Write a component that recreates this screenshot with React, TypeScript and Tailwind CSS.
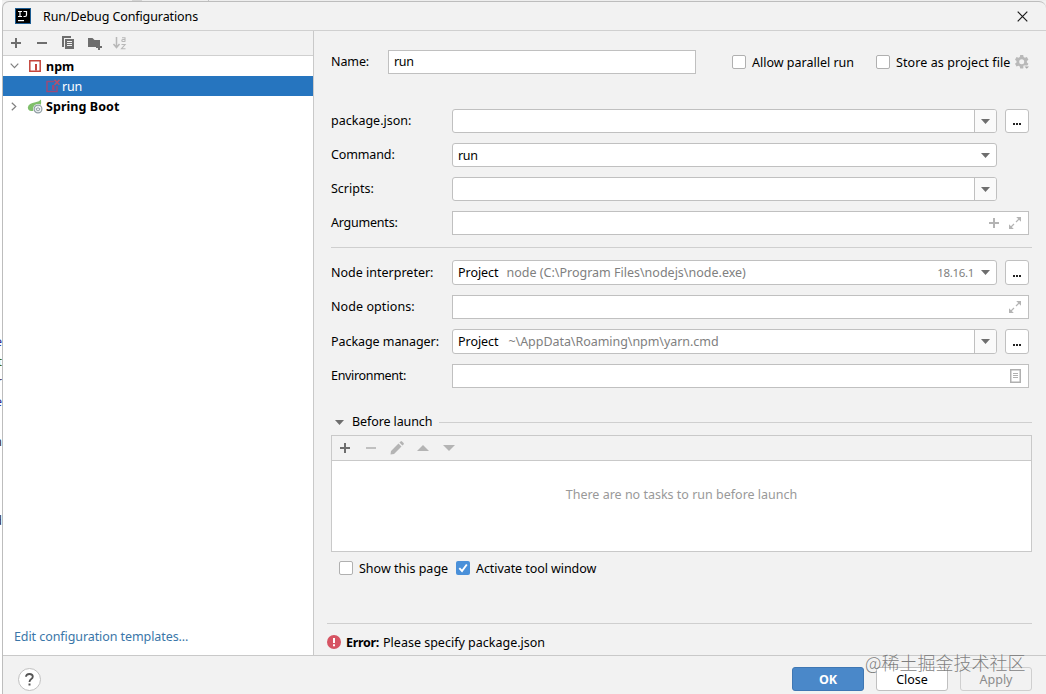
import React from "react";

const Plus = ({ className = "text-[#6e6e6e]" }: { className?: string }) => (
  <svg width="16" height="16" viewBox="0 0 16 16" className={className}>
    <path d="M7 3h2v4h4v2H9v4H7V9H3V7h4z" fill="currentColor" />
  </svg>
);

const Minus = ({ className = "text-[#6e6e6e]" }: { className?: string }) => (
  <svg width="16" height="16" viewBox="0 0 16 16" className={className}>
    <path d="M3 7h10v2H3z" fill="currentColor" />
  </svg>
);

const Copy = () => (
  <svg width="16" height="16" viewBox="0 0 16 16">
    <path d="M2 1h9v2H4v9H2z" fill="#6e6e6e" />
    <path d="M5 4h9v10H5z" fill="#6e6e6e" />
    <path d="M7 6.5h5M7 8.5h5M7 10.5h5" stroke="#f2f2f2" strokeWidth="1" />
  </svg>
);

const FolderPlus = () => (
  <svg width="16" height="16" viewBox="0 0 16 16">
    <path d="M2 3h4.500l2 2H14v4h-2v3H2z" fill="#6e6e6e" />
    <path d="M12 9h2v2h2v2h-2v2h-2v-2h-2v-2h2z" fill="#6e6e6e" />
  </svg>
);

const SortAz = () => (
  <svg width="16" height="16" viewBox="0 0 16 16" fill="none" stroke="#b8b8b8">
    <path d="M4.5 2v10M1.500 9l3 3.600 3-3.600" strokeWidth="1.500" />
    <path d="M10 2.700h3v4M13 4.500h-2.200q-1 0-1 1t1 1H13" strokeWidth="1.100" />
    <path d="M9.500 9.500h3.600l-3.600 4.200h4" strokeWidth="1.100" />
  </svg>
);

const Down = ({ className = "text-[#6e6e6e]" }: { className?: string }) => (
  <svg width="9" height="5" viewBox="0 0 9 5" className={className}>
    <path d="M0 0h9L4.500 5z" fill="currentColor" />
  </svg>
);

const Expand = () => (
  <svg width="14" height="14" viewBox="0 0 14 14" fill="none" stroke="#b4b4b4" strokeWidth="1.200">
    <path d="M8 6 11.500 2.500M2.500 11.500 6 8" />
    <path d="M8.200 1h4.800v4.800zM1 8.200v4.800h4.800z" fill="#b4b4b4" stroke="none" />
  </svg>
);

const Gear = () => (
  <svg width="16" height="16" viewBox="0 0 16 16">
    <path
      d="M6.200 1h3l.4 2 1.300.8 2-.7 1.500 2.600-1.500 1.300v1.500l1.500 1.300-1.500 2.600-2-.7-1.300.8-.4 2h-3l-.4-2-1.300-.8-2 .7L1 9.800l1.500-1.300V7L1 5.700l1.500-2.600 2 .7L5.800 3zM7.700 5.300a2.500 2.500 0 1 0 0 5 2.500 2.500 0 0 0 0-5z"
      fill="#b9b9b9"
      fillRule="evenodd"
    />
    <path d="M9.500 11.500h6v1.500l-2.800 2.800-3.200-2.800z" fill="#f2f2f2" />
    <path d="M10.500 12.500h4.500l-2.250 2.300z" fill="#a8a8a8" />
  </svg>
);

const Checkbox = ({ checked = false }: { checked?: boolean }) =>
  checked ? (
    <span className="flex h-[14px] w-[14px] shrink-0 items-center justify-center rounded-[2px] bg-[#4a90d9]">
      <svg width="14" height="14" viewBox="0 0 14 14">
        <path d="M3.300 7.200 6 10l4.800-6.500" fill="none" stroke="#fff" strokeWidth="1.900" />
      </svg>
    </span>
  ) : (
    <span className="h-[14px] w-[14px] shrink-0 rounded-[2px] border border-[#b0b0b0] bg-white" />
  );

const Combo = ({
  split = false,
  className = "h-6",
  children,
}: {
  split?: boolean;
  className?: string;
  children?: React.ReactNode;
}) => (
  <div className={`flex w-[545px] rounded-[3px] border border-[#c0c0c0] bg-white ${className}`}>
    <div className="flex flex-1 items-center pl-[5px]">{children}</div>
    <div
      className={`flex w-[22px] items-center justify-center ${
        split ? "rounded-r-[2px] border-l border-[#c0c0c0] bg-[#fafafa]" : ""
      }`}
    >
      <Down />
    </div>
  </div>
);

const Field = ({ children }: { children?: React.ReactNode }) => (
  <div className="flex h-6 w-[577px] items-center justify-end border border-[#c0c0c0] bg-white pr-[6px]">
    {children}
  </div>
);

const More = ({ className = "h-6" }: { className?: string }) => (
  <button
    className={`ml-2 flex w-6 items-center justify-center rounded-[3px] border border-[#c0c0c0] bg-white pt-[6px] ${className}`}
  >
    <svg width="8" height="2" viewBox="0 0 8 2">
      <path d="M0 0h2v2H0zM3 0h2v2H3zM6 0h2v2H6z" fill="#222" />
    </svg>
  </button>
);

const Row = ({
  label,
  className = "h-6",
  labelClass = "pb-px",
  children,
}: {
  label: string;
  className?: string;
  labelClass?: string;
  children: React.ReactNode;
}) => (
  <div className={`flex shrink-0 ${className}`}>
    <span className={`flex w-[121px] items-center ${labelClass}`}>{label}</span>
    {children}
  </div>
);

const fragments = [
  { t: "e", c: "text-[#2b2b90]", h: "h-5" },
  { t: "t", c: "text-[#4d6b10]", h: "h-5" },
  { t: "r", c: "text-[#443355]", h: "h-5" },
  { t: "e", c: "text-[#2b2b90]", h: "h-10" },
  { t: "n", c: "text-[#333333]", h: "h-[79px]" },
  { t: "d", c: "text-[#333333]", h: "h-5" },
];

export default function App() {
  return (
    <div className="relative flex h-[694px] w-[1046px] overflow-hidden bg-[#f2f2f2] font-['Noto_Sans','Noto_Sans_CJK_SC',sans-serif] text-[12.500px] leading-4 whitespace-nowrap text-black">
      <div className="w-[2px] shrink-0 overflow-hidden bg-white pt-[334px]">
        {fragments.map((f, i) => (
          <div key={i} className={`flex w-[2px] justify-end ${f.c} ${f.h}`}>
            {f.t}
          </div>
        ))}
      </div>
      <div className="flex min-w-0 flex-1 flex-col">
        <div className="flex h-px shrink-0 bg-[#eeeeee]">
          <span className="ml-[130px] w-[10px] bg-[#d4d4d4]" />
          <span className="ml-[66px] w-px bg-[#c4c4c4]" />
        </div>
        <div className="flex min-h-0 flex-1 flex-col rounded-t-[7px] border-t border-l border-[#bdbdbd] bg-[#f2f2f2]">
          <header className="flex h-[29px] shrink-0 items-center border-b border-[#d0d0d0] pr-[18px] pl-3">
            <svg width="16" height="16" viewBox="0 0 16 16">
              <path d="M0 0h16v16H0z" fill="#1c5c92" />
              <path d="M1 1h14v14H1z" fill="#000" />
              <path d="M3 3.500h4M5 3.500v5M3 8.500h4M8.500 3.500h3v3.500q0 1.500-1.500 1.500H8.500" fill="none" stroke="#fff" strokeWidth="1.200" />
              <path d="M3 12h6v1.200H3z" fill="#fff" />
            </svg>
            <h1 className="ml-3 flex-1 pt-0.5 tracking-[-0.100px]">Run/Debug Configurations</h1>
            <svg width="11" height="11" viewBox="0 0 11 11">
              <path d="m.7.7 9.600 9.600M10.300.7.7 10.300" stroke="#1a1a1a" strokeWidth="1.200" />
            </svg>
          </header>
          <main className="flex h-[624px] shrink-0">
            <aside className="flex w-[311px] shrink-0 flex-col border-r border-[#c9c9c9] bg-white">
              <div className="flex h-[25px] shrink-0 items-center gap-[10px] border-b border-[#d0d0d0] bg-[#f2f2f2] pl-[5px]">
                <Plus />
                <Minus />
                <Copy />
                <FolderPlus />
                <SortAz />
              </div>
              <div className="flex h-5 items-center pl-[7px] font-bold">
                <svg width="9" height="6" viewBox="0 0 9 6">
                  <path d="m.7.7 3.800 4 3.800-4" fill="none" stroke="#808080" strokeWidth="1.200" />
                </svg>
                <svg className="ml-[10px]" width="12" height="12" viewBox="0 0 12 12">
                  <path d="M.8.8h10.400v10.400H.8z" fill="#fff" stroke="#c4453c" strokeWidth="1.500" />
                  <path d="M6 4h2v6.500H6z" fill="#c4453c" />
                </svg>
                <span className="ml-[5px] pt-0.5">npm</span>
              </div>
              <div className="flex h-5 items-center bg-[#2675bf] pl-[43px] text-white">
                <svg width="14" height="14" viewBox="0 0 14 14">
                  <path d="M8 2.500H1v10h10V7" fill="none" stroke="#9b4b78" strokeWidth="1.500" />
                  <path d="M6 6h2.500v5H6z" fill="#9b4b78" />
                  <path d="m8.500.8 5 5M13.500.8l-5 5" stroke="#bb5068" strokeWidth="1.600" />
                </svg>
                <span className="ml-[2px] pt-0.5 tracking-[-0.200px]">run</span>
              </div>
              <div className="flex h-5 items-center pl-2 font-bold">
                <svg width="6" height="9" viewBox="0 0 6 9">
                  <path d="m.8.7 4 3.800-4 3.800" fill="none" stroke="#808080" strokeWidth="1.200" />
                </svg>
                <svg className="ml-[10px]" width="16" height="16" viewBox="0 0 16 16">
                  <path d="M14 1.500Q12.500 3.800 8.500 4.200 1.500 5 .8 9.500q0 2 1.500 3 5 1.500 8-1.500Q15 8 14 1.500z" fill="#7fbf6b" />
                  <circle cx="11" cy="11" r="5" fill="#fff" />
                  <circle cx="11" cy="11" r="3.900" fill="#f4f7f8" stroke="#8f9da3" strokeWidth="1.200" />
                  <path d="M11 8.700v2.500M9.300 10q-.6 2.800 1.700 2.900 2.300-.1 1.700-2.900" fill="none" stroke="#8f9da3" />
                </svg>
                <span className="ml-[3px] pt-0.5 tracking-[0.060px]">Spring Boot</span>
              </div>
              <a className="mt-auto mb-[10px] ml-[11px] tracking-[-0.080px] text-[#3a76a8]">Edit configuration templates...</a>
            </aside>
            <section className="flex min-w-0 flex-1 flex-col pl-[13px]">
              <div className="flex h-[592px] shrink-0 flex-col pl-1">
                <div className="mt-[19px] flex h-6 shrink-0 items-center">
                  <span className="w-[57px] tracking-[-0.100px]">Name:</span>
                  <div className="flex h-6 w-[308px] items-center border border-[#c0c0c0] bg-white pl-[5px] tracking-[-0.300px]">run</div>
                  <label className="ml-9 flex w-[144px] items-center gap-[6px]">
                    <Checkbox />
                    <span className="pt-0.5">Allow parallel run</span>
                  </label>
                  <label className="flex w-[138px] items-center gap-[6px]">
                    <Checkbox />
                    <span className="pt-0.5 tracking-[0.100px]">Store as project file</span>
                  </label>
                  <Gear />
                </div>
                <div className="mt-[35px] flex flex-col gap-[10px]">
                  <Row label="package.json:">
                    <Combo split />
                    <More />
                  </Row>
                  <Row label="Command:" labelClass="pb-px tracking-[-0.120px]">
                    <Combo>
                      <span className="pt-0.5 tracking-[-0.300px]">run</span>
                    </Combo>
                  </Row>
                  <Row label="Scripts:">
                    <Combo split />
                  </Row>
                  <Row label="Arguments:" labelClass="pb-px tracking-[-0.220px]">
                    <Field>
                      <span className="mr-[6px]">
                        <Plus className="text-[#b4b4b4]" />
                      </span>
                      <Expand />
                    </Field>
                  </Row>
                </div>
                <div className="mt-3 h-px w-[701px] shrink-0 bg-[#cfcfcf]" />
                <div className="mt-3 flex flex-col gap-[10px]">
                  <Row label="Node interpreter:" className="h-[25px]" labelClass="pt-px">
                    <Combo className="h-[25px]">
                      <span className="pt-px tracking-[-0.050px]">Project</span>
                      <span className="ml-2 flex-1 pt-px text-[#808080]">node (C:\Program Files\nodejs\node.exe)</span>
                      <span className="pt-px text-[11.500px] tracking-[-0.320px] text-[#808080]">18.16.1</span>
                    </Combo>
                    <More className="h-[25px]" />
                  </Row>
                  <Row label="Node options:" labelClass="pb-px tracking-[0.080px]">
                    <Field>
                      <Expand />
                    </Field>
                  </Row>
                  <Row label="Package manager:" className="h-[25px]" labelClass="pt-px tracking-[-0.060px]">
                    <Combo split className="h-[25px]">
                      <span className="pt-px tracking-[-0.050px]">Project</span>
                      <span className="ml-[10px] pt-px tracking-[-0.050px] text-[#808080]">~\AppData\Roaming\npm\yarn.cmd</span>
                    </Combo>
                    <More className="h-[25px]" />
                  </Row>
                  <Row label="Environment:" labelClass="pb-px tracking-[-0.320px]">
                    <Field>
                      <svg width="13" height="14" viewBox="0 0 13 14" fill="none" stroke="#b0b0b0">
                        <path d="M1.750.750h9.500v12.500h-9.500z" strokeWidth="1.500" />
                        <path d="M4 4.500h5M4 6.500h5M4 8.500h5" />
                      </svg>
                    </Field>
                  </Row>
                </div>
                <div className="mt-[25px] flex h-[18px] w-[701px] shrink-0 items-center pl-1">
                  <Down />
                  <span className="ml-2 w-[87px] tracking-[-0.100px]">Before launch</span>
                  <span className="h-px flex-1 bg-[#cfcfcf]" />
                </div>
                <div className="mt-1 flex h-[117px] w-[701px] shrink-0 flex-col border border-[#c9c9c9] bg-white">
                  <div className="flex h-[25px] shrink-0 items-center gap-[10px] border-b border-[#c9c9c9] bg-[#f2f2f2] pl-[5px]">
                    <Plus />
                    <Minus className="text-[#c0c0c0]" />
                    <svg width="16" height="16" viewBox="0 0 16 16" fill="#b4b4b4">
                      <path d="M9.500 3.500 12.500 6.500 5 14l-3.500.5L2 11zM10.400 2.600l1.200-1.200q.7-.6 1.400 0l1.600 1.600q.6.7 0 1.400l-1.200 1.200z" />
                    </svg>
                    <svg width="16" height="16" viewBox="0 0 16 16">
                      <path d="M2 11h12L8 5z" fill="#b4b4b4" />
                    </svg>
                    <svg width="16" height="16" viewBox="0 0 16 16">
                      <path d="M2 5h12l-6 6z" fill="#b4b4b4" />
                    </svg>
                  </div>
                  <div className="flex flex-1 items-start justify-center pt-[26px] text-[#999999]">
                    There are no tasks to run before launch
                  </div>
                </div>
                <div className="mt-2 flex h-4 items-center pl-2">
                  <label className="flex w-[117px] items-center gap-[6px]">
                    <Checkbox />
                    <span className="pt-0.5">Show this page</span>
                  </label>
                  <label className="flex items-center gap-[6px]">
                    <Checkbox checked />
                    <span className="pt-0.5 tracking-[-0.070px]">Activate tool window</span>
                  </label>
                </div>
              </div>
              <div className="flex h-8 w-[705px] items-center border-t border-[#cfcfcf] pt-[5px]">
                <svg width="14" height="14" viewBox="0 0 14 14">
                  <circle cx="7" cy="7" r="7" fill="#d65463" />
                  <path d="M6 3h2v5H6zM6 9.200h2v2H6z" fill="#fff" />
                </svg>
                <span className="ml-[5px] pt-0.5 font-bold tracking-[-0.300px]">Error:</span>
                <span className="ml-1 pt-0.5">Please specify package.json</span>
              </div>
            </section>
          </main>
          <footer className="flex flex-1 items-start border-t border-[#c9c9c9] pt-[11px] pl-[15px]">
            <button className="mt-px flex h-[23px] w-[23px] items-center justify-center rounded-full border border-[#c0c0c0] bg-white">
              <svg width="9" height="13" viewBox="0 0 9 13">
                <path d="M1 3.800Q1 1 4.400 1t3.400 2.700Q7.800 5 6 6.200 4.500 7.200 4.500 9" fill="none" stroke="#555" strokeWidth="1.800" />
                <path d="M3.500 10.500h2v2h-2z" fill="#555" />
              </svg>
            </button>
            <div className="ml-[751px] flex gap-3 pb-[3px]">
              <button className="h-6 w-[72px] rounded-[3px] border border-[#3f77b3] bg-[#4a88c9] pt-0.5 font-bold text-white">OK</button>
              <button className="h-6 w-[72px] rounded-[3px] border border-[#c0c0c0] bg-white pt-0.5">Close</button>
              <button className="h-6 w-[72px] rounded-[3px] border border-[#cfcfcf] pt-0.5 text-[#8c8c8c]">Apply</button>
            </div>
          </footer>
        </div>
      </div>
      <div className="absolute top-[650px] left-[865px] font-['Noto_Sans_CJK_SC',sans-serif] text-[18px] leading-6 font-light text-[#6a6a6a]/85">
        @稀土掘金技术社区
      </div>
    </div>
  );
}
